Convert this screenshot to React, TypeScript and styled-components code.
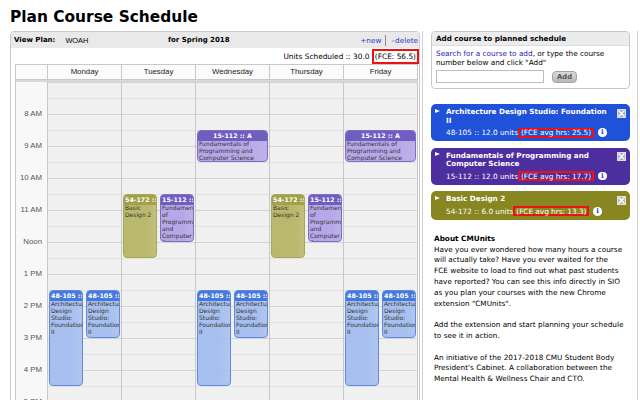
import React from "react";
import styled, { createGlobalStyle } from "styled-components";

type Tone = "blue" | "purple" | "olive";
type Slot = "full" | "a" | "b";

const HOUR = 32;
const DAY_START = 7;

const eventTones: Record<Tone, { head: string; body: string; border: string }> = {
  blue: { head: "#4779dd", body: "#a7c0ef", border: "#5f89de" },
  purple: { head: "#705dc0", body: "#b6a8e8", border: "#7e6cc9" },
  olive: { head: "#a3a148", body: "#bab86c", border: "#a9a756" },
};

const cardTones: Record<Tone, string> = {
  blue: "#1f52d8",
  purple: "#4c2e9e",
  olive: "#878620",
};

const slotLeft: Record<Slot, number> = { full: 1, a: 1, b: 38 };
const slotWidth: Record<Slot, number> = { full: 71, a: 34, b: 34 };

type CalEvent = {
  code: string;
  title: string;
  start: number;
  end: number;
  tone: Tone;
  slot: Slot;
};

const arch = "Architecture Design Studio: Foundation II";
const fund = "Fundamentals of Programming and Computer Science";

const archLong: CalEvent = { code: "48-105 :: A", title: arch, start: 13.5, end: 16.5, tone: "blue", slot: "a" };
const archShort: CalEvent = { code: "48-105 :: A", title: arch, start: 13.5, end: 15, tone: "blue", slot: "b" };
const fundFull: CalEvent = { code: "15-112 :: A", title: fund, start: 8.5, end: 9.5, tone: "purple", slot: "full" };
const fundSide: CalEvent = { code: "15-112 :: A", title: fund, start: 10.5, end: 12, tone: "purple", slot: "b" };
const basic: CalEvent = { code: "54-172 :: A", title: "Basic Design 2", start: 10.5, end: 12.5, tone: "olive", slot: "a" };

const days: { name: string; events: CalEvent[] }[] = [
  { name: "Monday", events: [archLong, archShort] },
  { name: "Tuesday", events: [basic, fundSide] },
  { name: "Wednesday", events: [fundFull, archLong, archShort] },
  { name: "Thursday", events: [basic, fundSide] },
  { name: "Friday", events: [fundFull, archLong, archShort] },
];

const times = ["8 AM", "9 AM", "10 AM", "11 AM", "Noon", "1 PM", "2 PM", "3 PM", "4 PM", "5 PM", "6 PM"];

const courses: { tone: Tone; title: string; code: string; units: string; fce: string }[] = [
  { tone: "blue", title: arch, code: "48-105", units: "12.0", fce: "25.5" },
  { tone: "purple", title: "Fundamentals of Programming and Computer Science", code: "15-112", units: "12.0", fce: "17.7" },
  { tone: "olive", title: "Basic Design 2", code: "54-172", units: "6.0", fce: "13.3" },
];

const aboutParas: string[][] = [
  [
    "Have you ever wondered how many hours a course",
    "will actually take? Have you ever waited for the",
    "FCE website to load to find out what past students",
    "have reported? You can see this info directly in SIO",
    "as you plan your courses with the new Chrome",
    'extension "CMUnits".',
  ],
  ["Add the extension and start planning your schedule", "to see it in action."],
  [
    "An initiative of the 2017-2018 CMU Student Body",
    "President's Cabinet. A collaboration between the",
    "Mental Health & Wellness Chair and CTO.",
  ],
];

const GlobalStyle = createGlobalStyle`
  html, body { margin: 0; padding: 0; background: #fff; overflow: hidden; }
  body { font-family: "DejaVu Sans", Verdana, sans-serif; color: #000; }
  * { box-sizing: border-box; }
`;

const Page = styled.div`
  width: 640px;
  height: 400px;
  overflow: hidden;
  padding: 7px 0 0 10px;
`;

const Title = styled.h1`
  margin: 0;
  font-size: 15.4px;
  line-height: 20px;
  font-weight: bold;
`;

const Columns = styled.div`
  display: flex;
  align-items: flex-start;
  gap: 2px;
  margin-top: 4px;
`;

const SchedulePanel = styled.section`
  width: 410px;
  height: 420px;
  border: 1px solid #c9c9c9;
  border-radius: 4px 4px 0 0;
`;

const PlanBar = styled.div`
  display: flex;
  align-items: center;
  height: 16px;
  padding: 0 1px 0 3px;
  background: #e9e9e9;
  border-radius: 3px 3px 0 0;
`;

const PlanLeft = styled.div`
  width: 154px;
  display: flex;
  align-items: center;
`;

const BoldLabel = styled.span`
  font-weight: bold;
  font-size: 7px;
`;

const PlanName = styled.span`
  font-family: "Liberation Sans", Arial, sans-serif;
  font-size: 7.4px;
  margin-left: 10px;
`;

const PlanLinks = styled.div`
  margin-left: auto;
  display: flex;
  align-items: center;
  font-size: 7.3px;
`;

const PlanLink = styled.a`
  color: #2b3bcf;
  text-decoration: none;
`;

const LinkDivider = styled.span`
  width: 1px;
  height: 11px;
  background: #8a8a8a;
  margin: 0 5px 0 4px;
`;

const UnitsRow = styled.div`
  height: 16px;
  display: flex;
  justify-content: flex-end;
  align-items: center;
  font-size: 7.4px;
  padding-top: 1px;
`;

const FceBox = styled.span<{ $h: number }>`
  display: inline-flex;
  align-items: center;
  height: ${(p) => p.$h}px;
  border: 2px solid #ee1111;
  padding: 0 1px;
  white-space: nowrap;
`;

const Table = styled.div`
  margin-left: 4px;
  width: 403px;
  border-left: 1px solid #c8c8c8;
  border-top: 1px solid #c8c8c8;
`;

const GridRow = styled.div`
  display: grid;
  grid-template-columns: 32px repeat(5, 74px);
`;

const HeadCell = styled.div`
  height: 15px;
  line-height: 14px;
  border-right: 1px solid #c8c8c8;
  border-bottom: 1px solid #c8c8c8;
  background: #fbfbfb;
  text-align: center;
  font-family: "Liberation Sans", Arial, sans-serif;
  font-size: 7.8px;
  color: #222;
`;

const Band = styled.div`
  height: 2px;
  background: #d8d8d8;
`;

const TimeCol = styled.div`
  height: 340px;
  padding-top: 16px;
  background: #f8f8f8;
  border-right: 1px solid #c8c8c8;
`;

const TimeLabel = styled.div`
  height: 32px;
  line-height: 32px;
  text-align: right;
  padding-right: 5px;
  font-family: "Liberation Sans", Arial, sans-serif;
  font-size: 7.8px;
  color: #555;
`;

const DayCol = styled.div`
  position: relative;
  height: 340px;
  border-right: 1px solid #c8c8c8;
  background: repeating-linear-gradient(
    to bottom,
    #d3d3d3 0px,
    #d3d3d3 1px,
    #f0f0f0 1px,
    #f0f0f0 16px,
    #e2e2e2 16px,
    #e2e2e2 17px,
    #f0f0f0 17px,
    #f0f0f0 32px
  );
`;

const EventBlock = styled.div<{ $tone: Tone; $slot: Slot; $top: number; $height: number }>`
  position: absolute;
  top: ${(p) => p.$top}px;
  height: ${(p) => p.$height}px;
  left: ${(p) => slotLeft[p.$slot]}px;
  width: ${(p) => slotWidth[p.$slot]}px;
  border: 1px solid ${(p) => eventTones[p.$tone].border};
  border-radius: 4px;
  background: linear-gradient(
    to right,
    ${(p) => eventTones[p.$tone].body},
    ${(p) => eventTones[p.$tone].body} 70%,
    ${(p) => eventTones[p.$tone].body}dd
  );
  overflow: hidden;
`;

const EventHead = styled.div<{ $tone: Tone }>`
  height: 10px;
  line-height: 10px;
  padding: 0 1px;
  background: ${(p) => eventTones[p.$tone].head};
  color: #fff;
  font-weight: bold;
  font-size: 6.3px;
  text-align: center;
  white-space: nowrap;
  overflow: hidden;
`;

const EventBody = styled.div`
  padding: 0 1px;
  font-size: 6px;
  line-height: 6.9px;
  color: #333;
`;

const Sidebar = styled.aside`
  width: 216px;
  height: 380px;
  border-left: 1px solid #cfcfcf;
  border-right: 1px solid #cfcfcf;
  padding: 0 7px 0 8px;
`;

const AddBox = styled.div`
  border: 1px solid #c8c8c8;
  border-radius: 4px;
  overflow: hidden;
`;

const AddHead = styled.div`
  height: 14px;
  line-height: 14px;
  padding-left: 4px;
  background: #ececec;
  border-bottom: 1px solid #dcdcdc;
  font-weight: bold;
  font-size: 7.2px;
`;

const AddBody = styled.div`
  padding: 3px 4px 5px;
  font-size: 7.3px;
  line-height: 9px;
`;

const AddText = styled.p`
  margin: 0;
`;

const SearchLink = styled.a`
  color: #2424b8;
  text-decoration: none;
`;

const AddForm = styled.div`
  display: flex;
  align-items: center;
  margin-top: 3px;
`;

const CourseInput = styled.input`
  width: 108px;
  height: 13px;
  border: 1px solid #bcbcbc;
  background: #fff;
  padding: 0;
  margin: 0;
`;

const AddButton = styled.button`
  margin-left: 8px;
  width: 25px;
  height: 12px;
  padding: 0;
  border: 1px solid #a4a4a4;
  border-radius: 4px;
  background: linear-gradient(#dadada, #b8b8b8);
  color: #555;
  font-family: "DejaVu Sans", Verdana, sans-serif;
  font-weight: bold;
  font-size: 6.8px;
  line-height: 10px;
`;

const CardList = styled.div`
  display: flex;
  flex-direction: column;
  gap: 6.7px;
  margin-top: 15px;
`;

const CourseCard = styled.div<{ $tone: Tone }>`
  position: relative;
  background: ${(p) => cardTones[p.$tone]};
  border-radius: 5px;
  padding: 4px 19px 3px 15px;
  color: #fff;
`;

const Arrow = styled.span`
  position: absolute;
  left: 4px;
  top: 4.5px;
  width: 0;
  height: 0;
  border-left: 5px solid #fff;
  border-top: 2.5px solid transparent;
  border-bottom: 2.5px solid transparent;
`;

const CloseBox = styled.span`
  position: absolute;
  right: 4px;
  top: 4.5px;
  width: 9px;
  height: 9px;
  background: rgba(205, 205, 210, 0.78);
  border: 1px solid rgba(235, 235, 240, 0.8);
  display: flex;
  align-items: center;
  justify-content: center;
`;

const CardTitle = styled.div`
  font-weight: bold;
  font-size: 7.2px;
  line-height: 8.5px;
`;

const CardUnits = styled.div`
  display: flex;
  align-items: center;
  height: 11px;
  margin-top: 2px;
  font-size: 7.3px;
  white-space: nowrap;
`;

const InfoDot = styled.span<{ $color: string }>`
  margin-left: 4px;
  width: 8.5px;
  height: 8.5px;
  border-radius: 50%;
  background: #fff;
  color: ${(p) => p.$color};
  font-family: "DejaVu Serif", Georgia, serif;
  font-weight: bold;
  font-size: 7px;
  line-height: 8.5px;
  text-align: center;
`;

const About = styled.div`
  margin: 14px 0 0 3px;
  font-size: 7.3px;
  line-height: 10.8px;
  white-space: nowrap;
`;

const AboutTitle = styled.div`
  font-weight: bold;
`;

const AboutPara = styled.p`
  margin: 0 0 10.8px;
`;

const AboutLine = styled.span`
  display: block;
`;

function CloseIcon() {
  return (
    <svg width="7" height="7" viewBox="0 0 7 7">
      <path d="M1 1 L6 6 M6 1 L1 6" stroke="#fff" strokeWidth="1.4" strokeLinecap="round" />
    </svg>
  );
}

export default function App() {
  return (
    <>
      <GlobalStyle />
      <Page>
        <Title>Plan Course Schedule</Title>
        <Columns>
          <SchedulePanel>
            <PlanBar>
              <PlanLeft>
                <BoldLabel>View Plan:</BoldLabel>
                <PlanName>WOAH</PlanName>
              </PlanLeft>
              <BoldLabel>for Spring 2018</BoldLabel>
              <PlanLinks>
                <PlanLink>+new</PlanLink>
                <LinkDivider />
                <PlanLink>–delete</PlanLink>
              </PlanLinks>
            </PlanBar>
            <UnitsRow>
              Units Scheduled :: 30.0&nbsp;<FceBox $h={15}>(FCE: 56.5)</FceBox>
            </UnitsRow>
            <Table>
              <GridRow>
                <HeadCell />
                {days.map((d) => (
                  <HeadCell key={d.name}>{d.name}</HeadCell>
                ))}
              </GridRow>
              <Band />
              <GridRow>
                <TimeCol>
                  {times.map((t) => (
                    <TimeLabel key={t}>{t}</TimeLabel>
                  ))}
                </TimeCol>
                {days.map((d) => (
                  <DayCol key={d.name}>
                    {d.events.map((e, i) => (
                      <EventBlock
                        key={i}
                        $tone={e.tone}
                        $slot={e.slot}
                        $top={(e.start - DAY_START) * HOUR}
                        $height={(e.end - e.start) * HOUR}
                      >
                        <EventHead $tone={e.tone}>{e.code}</EventHead>
                        <EventBody>{e.title}</EventBody>
                      </EventBlock>
                    ))}
                  </DayCol>
                ))}
              </GridRow>
            </Table>
          </SchedulePanel>

          <Sidebar>
            <AddBox>
              <AddHead>Add course to planned schedule</AddHead>
              <AddBody>
                <AddText>
                  <SearchLink>Search for a course to add</SearchLink>
                  <span>, or type the course</span>
                  <br />
                  <span>number below and click "Add"</span>
                </AddText>
                <AddForm>
                  <CourseInput />
                  <AddButton>Add</AddButton>
                </AddForm>
              </AddBody>
            </AddBox>

            <CardList>
              {courses.map((c) => (
                <CourseCard key={c.code} $tone={c.tone}>
                  <Arrow />
                  <CloseBox>
                    <CloseIcon />
                  </CloseBox>
                  <CardTitle>{c.title}</CardTitle>
                  <CardUnits>
                    {c.code} :: {c.units} units
                    <FceBox $h={10}>(FCE avg hrs: {c.fce})</FceBox>
                    <InfoDot $color="#1e4bc8">i</InfoDot>
                  </CardUnits>
                </CourseCard>
              ))}
            </CardList>

            <About>
              <AboutTitle>About CMUnits</AboutTitle>
              {aboutParas.map((p, i) => (
                <AboutPara key={i}>
                  {p.map((line) => (
                    <AboutLine key={line}>{line}</AboutLine>
                  ))}
                </AboutPara>
              ))}
            </About>
          </Sidebar>
        </Columns>
      </Page>
    </>
  );
}
